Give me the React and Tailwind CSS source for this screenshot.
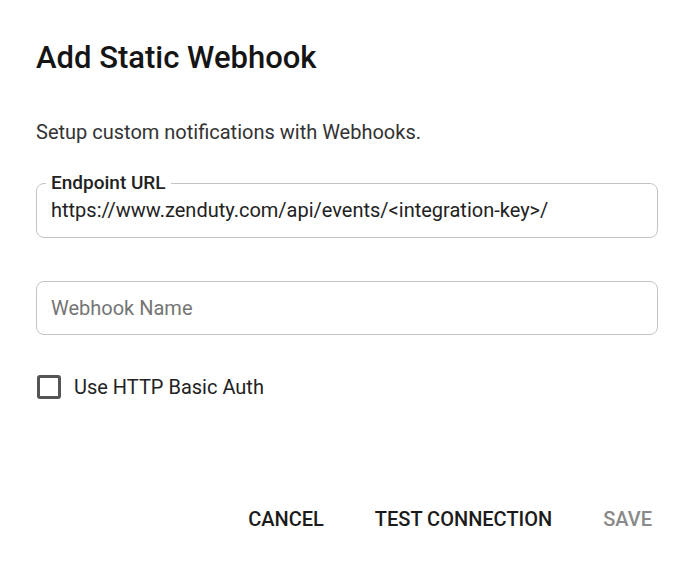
import { useState } from 'react';

export default function App() {
  const [basicAuth, setBasicAuth] = useState(false);
  const [name, setName] = useState('');

  return (
    <div className="h-[572px] w-[697px] bg-white pl-9 pr-[39px] pt-10 font-['Roboto',sans-serif]">
      <h2 className="text-[31px] font-medium leading-9 text-[#151515]">Add Static Webhook</h2>

      <p className="mt-11 text-[20px] leading-6 text-[#333]">Setup custom notifications with Webhooks.</p>

      <fieldset className="mt-7 rounded-lg border border-[#c4c4c4] px-[14px] pb-[15px] pt-1">
        <legend className="-ml-[5px] px-[5px] text-[19px] font-medium leading-[22px] text-[#222]">
          Endpoint URL
        </legend>
        <input
          className="block w-full bg-transparent text-[20px] leading-6 text-[#222] outline-none"
          defaultValue="https://www.zenduty.com/api/events/<integration-key>/"
        />
      </fieldset>

      <div className="mt-[43px] flex h-[54px] items-center rounded-lg border border-[#c4c4c4] px-[14px]">
        <input
          className="w-full bg-transparent text-[20px] leading-6 text-[#222] outline-none placeholder:text-[#757575]"
          placeholder="Webhook Name"
          value={name}
          onChange={(e) => setName(e.target.value)}
        />
      </div>

      <label className="mt-10 flex cursor-pointer items-center gap-[13px]">
        <span
          className="ml-px flex h-6 w-6 items-center justify-center rounded-[3px] border-[3px] border-[#555]"
          onClick={() => setBasicAuth((v) => !v)}
        >
          {basicAuth ? <span className="h-3 w-3 bg-[#555]" /> : null}
        </span>
        <span className="text-[20px] leading-6 text-[#222]">Use HTTP Basic Auth</span>
      </label>

      <div className="mr-[6px] mt-[108px] flex justify-end gap-[51px] text-[20px] font-medium leading-6">
        <button type="button" className="uppercase text-[#1b1b1b]">Cancel</button>
        <button type="button" className="uppercase text-[#1b1b1b]">Test Connection</button>
        <button type="button" disabled className="uppercase text-[#8a8a8a]">Save</button>
      </div>
    </div>
  );
}
